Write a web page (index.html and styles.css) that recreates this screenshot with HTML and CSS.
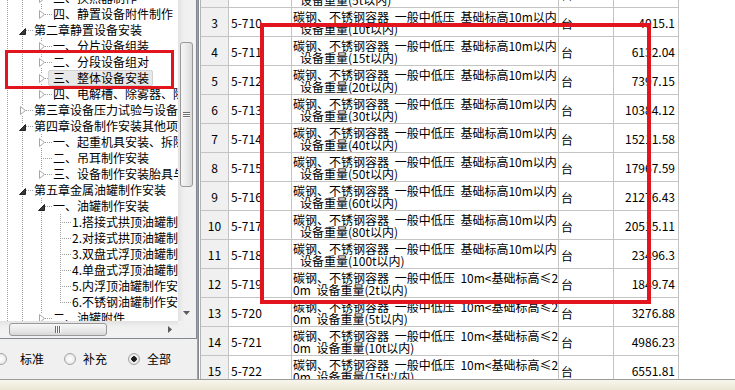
FILE: index.html
```html
<!DOCTYPE html>
<html lang="zh-CN">
<head>
<meta charset="utf-8">
<title>定额库</title>
<link rel="stylesheet" href="styles.css">
</head>
<body>
<div class="main">
  <div class="left">
    <div class="treebox">
      <div class="treetop">
        <div class="tree">
          <div class="tree-in">
            <div class="node"><i class="g0"></i><i class="g v"></i><i class="x"><svg class="cl" width="6" height="9" viewBox="0 0 6 9"><path d="M0.5 0.5 L5.5 4.5 L0.5 8.5 Z" fill="#fff" stroke="#a6a6a6"/></svg></i><span class="t">三、换热器制作</span></div>
            <div class="node"><i class="g0"></i><i class="g v"></i><i class="x last"><svg class="cl" width="6" height="9" viewBox="0 0 6 9"><path d="M0.5 0.5 L5.5 4.5 L0.5 8.5 Z" fill="#fff" stroke="#a6a6a6"/></svg></i><span class="t">四、静置设备附件制作</span></div>
            <div class="node"><i class="g0"></i><i class="x"><svg class="op" width="7" height="7" viewBox="0 0 7 7"><path d="M6.5 0.5 L6.5 6.5 L0.5 6.5 Z" fill="#3a3a3a" stroke="#222"/></svg></i><span class="t">第二章静置设备安装</span></div>
            <div class="node"><i class="g0"></i><i class="g v"></i><i class="x"><svg class="cl" width="6" height="9" viewBox="0 0 6 9"><path d="M0.5 0.5 L5.5 4.5 L0.5 8.5 Z" fill="#fff" stroke="#a6a6a6"/></svg></i><span class="t">一、分片设备组装</span></div>
            <div class="node"><i class="g0"></i><i class="g v"></i><i class="x"><svg class="cl" width="6" height="9" viewBox="0 0 6 9"><path d="M0.5 0.5 L5.5 4.5 L0.5 8.5 Z" fill="#fff" stroke="#a6a6a6"/></svg></i><span class="t">二、分段设备组对</span></div>
            <div class="node"><i class="g0"></i><i class="g v"></i><i class="x"><svg class="cl" width="6" height="9" viewBox="0 0 6 9"><path d="M0.5 0.5 L5.5 4.5 L0.5 8.5 Z" fill="#fff" stroke="#a6a6a6"/></svg></i><span class="t sel">三、整体设备安装</span></div>
            <div class="node"><i class="g0"></i><i class="g v"></i><i class="x last"><svg class="cl" width="6" height="9" viewBox="0 0 6 9"><path d="M0.5 0.5 L5.5 4.5 L0.5 8.5 Z" fill="#fff" stroke="#a6a6a6"/></svg></i><span class="t">四、电解槽、除雾器、除尘器</span></div>
            <div class="node"><i class="g0"></i><i class="x"><svg class="cl" width="6" height="9" viewBox="0 0 6 9"><path d="M0.5 0.5 L5.5 4.5 L0.5 8.5 Z" fill="#fff" stroke="#a6a6a6"/></svg></i><span class="t">第三章设备压力试验与设备清洗</span></div>
            <div class="node"><i class="g0"></i><i class="x"><svg class="op" width="7" height="7" viewBox="0 0 7 7"><path d="M6.5 0.5 L6.5 6.5 L0.5 6.5 Z" fill="#3a3a3a" stroke="#222"/></svg></i><span class="t">第四章设备制作安装其他项目</span></div>
            <div class="node"><i class="g0"></i><i class="g v"></i><i class="x"><svg class="cl" width="6" height="9" viewBox="0 0 6 9"><path d="M0.5 0.5 L5.5 4.5 L0.5 8.5 Z" fill="#fff" stroke="#a6a6a6"/></svg></i><span class="t">一、起重机具安装、拆除</span></div>
            <div class="node"><i class="g0"></i><i class="g v"></i><i class="x"></i><span class="t">二、吊耳制作安装</span></div>
            <div class="node"><i class="g0"></i><i class="g v"></i><i class="x last"><svg class="cl" width="6" height="9" viewBox="0 0 6 9"><path d="M0.5 0.5 L5.5 4.5 L0.5 8.5 Z" fill="#fff" stroke="#a6a6a6"/></svg></i><span class="t">三、设备制作安装胎具与加固</span></div>
            <div class="node"><i class="g0"></i><i class="x"><svg class="op" width="7" height="7" viewBox="0 0 7 7"><path d="M6.5 0.5 L6.5 6.5 L0.5 6.5 Z" fill="#3a3a3a" stroke="#222"/></svg></i><span class="t">第五章金属油罐制作安装</span></div>
            <div class="node"><i class="g0"></i><i class="g v"></i><i class="x"><svg class="op" width="7" height="7" viewBox="0 0 7 7"><path d="M6.5 0.5 L6.5 6.5 L0.5 6.5 Z" fill="#3a3a3a" stroke="#222"/></svg></i><span class="t">一、油罐制作安装</span></div>
            <div class="node"><i class="g0"></i><i class="g v"></i><i class="g v"></i><i class="x"></i><span class="t">1.搭接式拱顶油罐制作安装</span></div>
            <div class="node"><i class="g0"></i><i class="g v"></i><i class="g v"></i><i class="x"></i><span class="t">2.对接式拱顶油罐制作安装</span></div>
            <div class="node"><i class="g0"></i><i class="g v"></i><i class="g v"></i><i class="x"></i><span class="t">3.双盘式浮顶油罐制作安装</span></div>
            <div class="node"><i class="g0"></i><i class="g v"></i><i class="g v"></i><i class="x"></i><span class="t">4.单盘式浮顶油罐制作安装</span></div>
            <div class="node"><i class="g0"></i><i class="g v"></i><i class="g v"></i><i class="x"></i><span class="t">5.内浮顶油罐制作安装</span></div>
            <div class="node"><i class="g0"></i><i class="g v"></i><i class="g v"></i><i class="x last"></i><span class="t">6.不锈钢油罐制作安装</span></div>
            <div class="node"><i class="g0"></i><i class="g v"></i><i class="x"><svg class="cl" width="6" height="9" viewBox="0 0 6 9"><path d="M0.5 0.5 L5.5 4.5 L0.5 8.5 Z" fill="#fff" stroke="#a6a6a6"/></svg></i><span class="t">二、油罐附件</span></div>
          </div>
        </div>
        <div class="vscroll">
          <div class="vthumb">
            <svg width="7" height="6" viewBox="0 0 7 6"><path d="M0 0.5H7M0 2.5H7M0 4.5H7" stroke="#6e6e6e"/><path d="M0 1.5H7M0 3.5H7M0 5.5H7" stroke="#fbfbfb"/></svg>
          </div>
          <div class="vfill"></div>
          <div class="varrow"><svg width="7" height="4" viewBox="0 0 7 4"><path d="M0 0H7L3.5 4Z" fill="#5a5a5a"/></svg></div>
        </div>
      </div>
      <div class="hrow">
        <div class="hscroll">
          <div class="hthumb">
            <svg width="6" height="7" viewBox="0 0 6 7"><path d="M0.5 0V7M2.5 0V7M4.5 0V7" stroke="#6e6e6e"/><path d="M1.5 0V7M3.5 0V7M5.5 0V7" stroke="#fbfbfb"/></svg>
          </div>
          <div class="hfill"></div>
          <div class="harrow"><svg width="4" height="7" viewBox="0 0 4 7"><path d="M0 0L4 3.5L0 7Z" fill="#5a5a5a"/></svg></div>
        </div>
        <div class="corner"></div>
      </div>
    </div>
    <div class="radios">
      <label class="radio r1"><span class="rb"></span><span class="rl">标准</span></label>
      <label class="radio r2"><span class="rb"></span><span class="rl">补充</span></label>
      <label class="radio r3"><span class="rb on"></span><span class="rl">全部</span></label>
    </div>
  </div>

  <div class="right">
    <div class="grid">
      <div class="row"><div class="c no">2</div><div class="c code">5-709</div><div class="c desc"><div>碳钢、不锈钢容器 一般中低压 基础标高10m以内</div><div class="ind">设备重量(5t以内)</div></div><div class="c unit">台</div><div class="c price">2795.47</div></div>
      <div class="row"><div class="c no">3</div><div class="c code">5-710</div><div class="c desc"><div>碳钢、不锈钢容器 一般中低压 基础标高10m以内</div><div class="ind">设备重量(10t以内)</div></div><div class="c unit">台</div><div class="c price">4015.1</div></div>
      <div class="row"><div class="c no">4</div><div class="c code">5-711</div><div class="c desc"><div>碳钢、不锈钢容器 一般中低压 基础标高10m以内</div><div class="ind">设备重量(15t以内)</div></div><div class="c unit">台</div><div class="c price">6132.04</div></div>
      <div class="row"><div class="c no">5</div><div class="c code">5-712</div><div class="c desc"><div>碳钢、不锈钢容器 一般中低压 基础标高10m以内</div><div class="ind">设备重量(20t以内)</div></div><div class="c unit">台</div><div class="c price">7397.15</div></div>
      <div class="row"><div class="c no">6</div><div class="c code">5-713</div><div class="c desc"><div>碳钢、不锈钢容器 一般中低压 基础标高10m以内</div><div class="ind">设备重量(30t以内)</div></div><div class="c unit">台</div><div class="c price">10384.12</div></div>
      <div class="row"><div class="c no">7</div><div class="c code">5-714</div><div class="c desc"><div>碳钢、不锈钢容器 一般中低压 基础标高10m以内</div><div class="ind">设备重量(40t以内)</div></div><div class="c unit">台</div><div class="c price">15211.58</div></div>
      <div class="row"><div class="c no">8</div><div class="c code">5-715</div><div class="c desc"><div>碳钢、不锈钢容器 一般中低压 基础标高10m以内</div><div class="ind">设备重量(50t以内)</div></div><div class="c unit">台</div><div class="c price">17967.59</div></div>
      <div class="row"><div class="c no">9</div><div class="c code">5-716</div><div class="c desc"><div>碳钢、不锈钢容器 一般中低压 基础标高10m以内</div><div class="ind">设备重量(60t以内)</div></div><div class="c unit">台</div><div class="c price">21276.43</div></div>
      <div class="row"><div class="c no">10</div><div class="c code">5-717</div><div class="c desc"><div>碳钢、不锈钢容器 一般中低压 基础标高10m以内</div><div class="ind">设备重量(80t以内)</div></div><div class="c unit">台</div><div class="c price">20515.11</div></div>
      <div class="row"><div class="c no">11</div><div class="c code">5-718</div><div class="c desc"><div>碳钢、不锈钢容器 一般中低压 基础标高10m以内</div><div class="ind">设备重量(100t以内)</div></div><div class="c unit">台</div><div class="c price">23496.3</div></div>
      <div class="row"><div class="c no">12</div><div class="c code">5-719</div><div class="c desc"><div>碳钢、不锈钢容器 一般中低压 10m&lt;基础标高≤2</div><div>0m 设备重量(2t以内)</div></div><div class="c unit">台</div><div class="c price">1849.74</div></div>
      <div class="row"><div class="c no">13</div><div class="c code">5-720</div><div class="c desc"><div>碳钢、不锈钢容器 一般中低压 10m&lt;基础标高≤2</div><div>0m 设备重量(5t以内)</div></div><div class="c unit">台</div><div class="c price">3276.88</div></div>
      <div class="row"><div class="c no">14</div><div class="c code">5-721</div><div class="c desc"><div>碳钢、不锈钢容器 一般中低压 10m&lt;基础标高≤2</div><div>0m 设备重量(10t以内)</div></div><div class="c unit">台</div><div class="c price">4986.23</div></div>
      <div class="row"><div class="c no">15</div><div class="c code">5-722</div><div class="c desc"><div>碳钢、不锈钢容器 一般中低压 10m&lt;基础标高≤2</div><div>0m 设备重量(15t以内)</div></div><div class="c unit">台</div><div class="c price">6551.81</div></div>
    </div>
  </div>
</div>
<div class="status"></div>
<div class="hl hl-tree"></div>
<div class="hl hl-grid"></div>
</body>
</html>
```
FILE: styles.css
```css
html, body {
  margin: 0;
  padding: 0;
}
body {
  position: relative;
  width: 735px;
  height: 390px;
  overflow: hidden;
  background: #f0f0f0;
  font-family: "Noto Sans CJK SC", "Noto Sans", sans-serif;
  font-size: 12px;
  color: #000;
}

.main {
  display: flex;
  height: 379px;
}

/* ---------- left panel ---------- */
.left {
  flex: none;
  width: 197px;
  border-right: 1px solid #a0a0a0;
  display: flex;
  flex-direction: column;
}
.treebox {
  flex: none;
  border-right: 1px solid #828790;
  border-bottom: 1px solid #828790;
}
.treetop {
  display: flex;
  height: 321px;
}
.tree {
  width: 178px;
  height: 321px;
  flex: none;
  background: #fff;
  overflow: hidden;
}
.tree-in {
  margin-top: -10px;
}
.node {
  display: flex;
  height: 16px;
  white-space: nowrap;
}
.node i {
  display: flex;
  flex: none;
  font-style: normal;
}
.g0 {
  width: 14px;
  background: repeating-linear-gradient(to bottom, #a0a0a0 0 1px, transparent 1px 2px) 7px 0 / 1px 100% no-repeat;
}
.g {
  width: 19px;
}
.g.v {
  background: repeating-linear-gradient(to bottom, #a0a0a0 0 1px, transparent 1px 2px) 8px 0 / 1px 100% no-repeat;
}
.x {
  width: 19px;
  align-items: center;
  background:
    repeating-linear-gradient(to bottom, #a0a0a0 0 1px, transparent 1px 2px) 8px 0 / 1px 100% no-repeat,
    repeating-linear-gradient(to right, #a0a0a0 0 1px, transparent 1px 2px) 10px 8px / 9px 1px no-repeat;
}
.x.last {
  background-size: 1px 9px, 9px 1px;
}
.x .cl {
  margin-left: 6px;
  background: #fff;
  padding: 1px 0;
}
.x .op {
  margin: 2px 0 0 5px;
  background: #fff;
}
.t {
  line-height: 16px;
  padding-left: 1px;
}
.t.sel {
  align-self: center;
  line-height: 14px;
  margin-left: -4px;
  padding: 0 3px 0 4px;
  background: #e8e8e8;
  border: 1px solid #d2d2d2;
  border-radius: 2px;
}

/* vertical scrollbar */
.vscroll {
  flex: none;
  width: 17px;
  display: flex;
  flex-direction: column;
  background: linear-gradient(to right, #e2e2e2, #f0f0f0 35%, #f2f2f2);
}
.vthumb {
  margin: 42px 0 0 2px;
  width: 13px;
  height: 145px;
  box-sizing: border-box;
  border: 1px solid #999;
  border-radius: 3px;
  background: linear-gradient(to right, #f6f6f6, #e9e9e9 55%, #d8d8d8);
  display: flex;
  align-items: center;
  justify-content: center;
}
.vfill {
  flex: 1;
}
.varrow {
  height: 17px;
  display: flex;
  align-items: center;
  justify-content: center;
}

/* horizontal scrollbar */
.hrow {
  display: flex;
  height: 17px;
}
.hscroll {
  width: 178px;
  flex: none;
  display: flex;
  align-items: center;
  background: linear-gradient(to bottom, #e2e2e2, #f0f0f0 35%, #f2f2f2);
}
.hthumb {
  margin-left: 9px;
  width: 98px;
  height: 13px;
  box-sizing: border-box;
  border: 1px solid #999;
  border-radius: 3px;
  background: linear-gradient(to bottom, #f6f6f6, #e9e9e9 55%, #d8d8d8);
  display: flex;
  align-items: center;
  justify-content: center;
}
.hfill {
  flex: 1;
}
.harrow {
  width: 17px;
  align-self: stretch;
  display: flex;
  align-items: center;
  justify-content: center;
}
.corner {
  width: 17px;
  background: #f0f0f0;
}

/* radios */
.radios {
  flex: 1;
  display: flex;
  align-items: center;
}
.radio {
  display: flex;
  align-items: center;
}
.rb {
  width: 12px;
  height: 12px;
  box-sizing: border-box;
  border: 1px solid #a5a5a5;
  border-radius: 50%;
  background: radial-gradient(circle, #ffffff 0, #f2f2f2 45%, #d9d9d9 100%);
}
.rb.on {
  background: radial-gradient(circle, #1c1c1c 0 2.5px, #f4f4f4 3px, #dadada 6px);
}
.rl {
  line-height: 16px;
  margin-left: 7px;
}
.r1 .rb { margin-left: -5px; }
.r1 .rl { margin-left: 13px; }
.r2 { margin-left: 20px; }
.r3 { margin-left: 21px; }

/* ---------- right grid ---------- */
.right {
  flex: 1;
  border-left: 1px solid #828790;
  background: #fff;
  overflow: hidden;
}
.grid {
  margin-left: 1px;
  margin-top: -21px;
  border-left: 1px solid #b4b4b4;
}
.row {
  display: flex;
  height: 29px;
}
.c {
  flex: none;
  box-sizing: border-box;
  border-right: 1px solid #c4c4c4;
  border-bottom: 1px solid #c4c4c4;
  overflow: hidden;
  white-space: nowrap;
}
.no {
  width: 28px;
  background: #f0f0f0;
  text-align: center;
  padding-top: 2px;
  line-height: 26px;
}
.code {
  width: 63px;
  padding: 2px 0 0 2px;
  line-height: 26px;
}
.desc {
  width: 267px;
  padding: 3px 0 0 1px;
  line-height: 12px;
  word-spacing: 3px;
}
.desc .ind {
  padding-left: 7px;
}
.unit {
  width: 55px;
  padding: 4px 0 0 2px;
  line-height: 24px;
}
.price {
  width: 65px;
  text-align: right;
  padding: 2px 3px 0 0;
  line-height: 26px;
}

/* ---------- status strip ---------- */
.status {
  height: 10px;
  border-top: 1px solid #9c9c9c;
  background: linear-gradient(to bottom, #f8f6ec, #ebe7d5);
}

/* ---------- red annotation boxes ---------- */
.hl {
  position: absolute;
  box-sizing: border-box;
  border-style: solid;
  border-color: #e2141d;
}
.hl-tree {
  left: 5px;
  top: 50px;
  width: 169px;
  height: 39px;
  border-width: 3px;
}
.hl-grid {
  left: 260px;
  top: 23px;
  width: 391px;
  height: 281px;
  border-width: 4px;
}
```
